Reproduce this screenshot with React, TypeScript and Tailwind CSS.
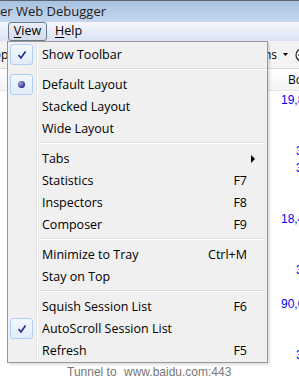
import type { ReactNode } from "react"

type Item =
    | { kind: "sep" }
    | { kind: "item"; label: string; key?: string; mark?: "check" | "radio"; sub?: boolean }

const items: Item[] = [
    { kind: "item", label: "Show Toolbar", mark: "check" },
    { kind: "sep" },
    { kind: "item", label: "Default Layout", mark: "radio" },
    { kind: "item", label: "Stacked Layout" },
    { kind: "item", label: "Wide Layout" },
    { kind: "sep" },
    { kind: "item", label: "Tabs", sub: true },
    { kind: "item", label: "Statistics", key: "F7" },
    { kind: "item", label: "Inspectors", key: "F8" },
    { kind: "item", label: "Composer", key: "F9" },
    { kind: "sep" },
    { kind: "item", label: "Minimize to Tray", key: "Ctrl+M" },
    { kind: "item", label: "Stay on Top" },
    { kind: "sep" },
    { kind: "item", label: "Squish Session List", key: "F6" },
    { kind: "item", label: "AutoScroll Session List", mark: "check" },
    { kind: "item", label: "Refresh", key: "F5" },
]

// body column values of the session list, "" = empty row
const rows = ["19,8", "", "", "3", "3", "", "", "18,4", "", "", "3", "", "90,0", "", "", "3"]

function MarkBox({ children }: { children: ReactNode }) {
    return (
        <div className="ml-[2px] mt-px flex h-[21px] w-[23px] items-center justify-center rounded-[3px] border border-[#aecff7] bg-gradient-to-b from-[#f2f8fe] to-[#e1edfb]">
            {children}
        </div>
    )
}

function ViewMenu() {
    return (
        <div className="absolute left-[7px] top-[41px] w-[261px] border border-[#979797] bg-[#f0f0f0] py-px pr-px text-[12.5px] shadow-[2px_2px_2px_rgba(0,0,0,0.12)]">
            <div className="relative">
                <div className="absolute bottom-0 top-0 left-[28px] w-px bg-[#e2e3e3]" />
                <div className="absolute bottom-0 top-0 left-[29px] w-px bg-white" />
                {items.map((it, i) =>
                    it.kind === "sep" ? (
                        <div key={i} className="flex h-[8px] flex-col justify-center pl-[30px]">
                            <div className="h-px bg-[#e0e0e0]" />
                            <div className="h-px bg-white" />
                        </div>
                    ) : (
                        <div key={i} className="relative flex h-[22px] items-start">
                            <div className="w-[30px] shrink-0">
                                {it.mark === "check" && (
                                    <MarkBox>
                                        <svg width="10" height="10" viewBox="0 0 10 10">
                                            <path d="M1.5 5 L4 8 L8.5 1.5" fill="none" stroke="#1b2a8a" strokeWidth="1.6" />
                                        </svg>
                                    </MarkBox>
                                )}
                                {it.mark === "radio" && (
                                    <MarkBox>
                                        <div className="h-[7px] w-[7px] rounded-full bg-[radial-gradient(circle_at_35%_35%,#a9a9e6,#2c2c8c_70%)]" />
                                    </MarkBox>
                                )}
                            </div>
                            <span className="ml-[4px] pt-px leading-[22px]">{it.label}</span>
                            {it.key && <span className="ml-auto mr-[19px] pt-px leading-[22px]">{it.key}</span>}
                            {it.sub && (
                                <svg className="ml-auto mr-[11px] mt-[8px]" width="4" height="8" viewBox="0 0 4 8">
                                    <path d="M0 0 L4 4 L0 8 Z" fill="#000" />
                                </svg>
                            )}
                        </div>
                    )
                )}
            </div>
        </div>
    )
}

export default function App() {
    return (
        <div className="relative h-[378px] w-[299px] overflow-hidden bg-white font-['Open_Sans',sans-serif] text-[12px] text-black">
            {/* title bar */}
            <div className="h-[22px] border-t border-[#5b6470] bg-gradient-to-b from-[#a8c2e0] to-[#c4d7ed] pl-0 text-[13px] leading-[20px] text-[#1e1e1e]">
                er Web Debugger
            </div>
            {/* menu bar */}
            <div className="flex h-[19px] items-center bg-gradient-to-b from-[#f6f8fc] to-[#d9e3f3] text-[12.5px]">
                <div className="ml-[8px] flex h-[19px] w-[39px] items-center justify-center rounded-[3px] border border-[#6e7b8c] bg-gradient-to-b from-[#e9eef6] to-[#d3dcea]">
                    <span>
                        <span className="underline decoration-1 underline-offset-2">V</span>iew
                    </span>
                </div>
                <span className="ml-[8px]">
                    <span className="underline decoration-1 underline-offset-2">H</span>elp
                </span>
            </div>
            {/* toolbar */}
            <div className="flex h-[28px] items-center border-b border-[#d5d5d5] bg-[#f3f3f3] whitespace-nowrap">
                <div className="flex w-[277px] shrink-0 justify-between">
                    <span className="ml-[-17px]">Stop</span>
                    <span>All sessions</span>
                </div>
                <svg className="ml-[6px] shrink-0" width="5" height="3" viewBox="0 0 5 3">
                    <path d="M0 0 L5 0 L2.5 3 Z" fill="#000" />
                </svg>
                <svg className="ml-[7px] shrink-0" width="14" height="14" viewBox="0 0 14 14">
                    <circle cx="7" cy="7" r="6" fill="none" stroke="#222" strokeWidth="1.2" />
                    <path d="M7 3 V11 M3 7 H11" stroke="#222" strokeWidth="1.2" />
                </svg>
            </div>
            {/* session list header */}
            <div className="flex h-[22px] items-center border-b border-[#e5e5e5] bg-gradient-to-b from-white to-[#f3f4f6]">
                <div className="ml-[268px] h-full w-px bg-[#d5d5d5]" />
                <span className="ml-[20px]">Body</span>
            </div>
            {/* session list rows */}
            <div className="font-['Liberation_Sans',sans-serif] text-[12px]">
                {rows.map((r, i) => (
                    <div key={i} className="flex h-[17px] items-center text-[#0000f0] whitespace-nowrap">
                        {r && <span className={r.length > 1 ? "ml-[281px]" : "ml-[296px]"}>{r}</span>}
                    </div>
                ))}
                <div className="flex h-[17px] items-center text-[#777777] whitespace-nowrap">
                    <span className="ml-[67px] w-[57px]">Tunnel to</span>
                    <span>www.baidu.com:443</span>
                </div>
            </div>
            <ViewMenu />
        </div>
    )
}
